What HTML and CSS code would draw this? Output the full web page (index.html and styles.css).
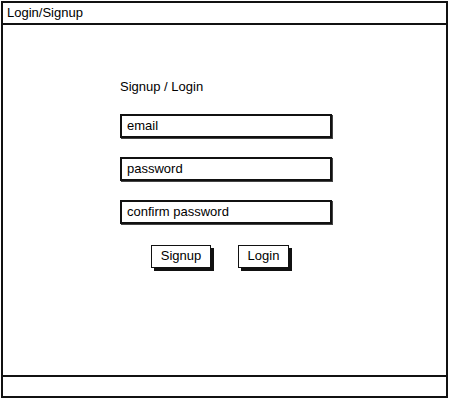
FILE: index.html
```html
<!DOCTYPE html>
<html>
<head>
<meta charset="utf-8">
<link rel="stylesheet" href="styles.css">
</head>
<body>
<div class="window">
  <div class="titlebar">Login/Signup</div>
  <div class="main">
    <div class="form">
      <div class="label">Signup / Login</div>
      <div class="field">email</div>
      <div class="field">password</div>
      <div class="field">confirm password</div>
      <div class="buttons">
        <div class="btn btn-signup">Signup</div>
        <div class="btn btn-login">Login</div>
      </div>
    </div>
  </div>
  <div class="footer"></div>
</div>
</body>
</html>
```
FILE: styles.css
```css
html, body {
  margin: 0;
  padding: 0;
  background: #fff;
}
body {
  width: 450px;
  height: 400px;
  font-family: "Liberation Sans", Arial, sans-serif;
  color: #000;
}
.window {
  margin: 1px;
  width: 447px;
  height: 397px;
  box-sizing: border-box;
  border: 2px solid #111;
  display: flex;
  flex-direction: column;
}
.titlebar {
  height: 20px;
  border-bottom: 2px solid #111;
  font-size: 13px;
  line-height: 20px;
  padding-left: 4px;
}
.main {
  flex: 1;
}
.form {
  padding-top: 54px;
  padding-left: 117px;
  display: flex;
  flex-direction: column;
  align-items: flex-start;
}
.label {
  font-size: 13px;
  line-height: 16px;
  margin-bottom: 19px;
}
.field {
  width: 212px;
  height: 24px;
  box-sizing: border-box;
  border: 2px solid #111;
  box-shadow: 1px 1px 0 #444;
  font-size: 13px;
  line-height: 20px;
  padding-left: 5px;
  margin-bottom: 19px;
}
.buttons {
  display: flex;
  gap: 27px;
  margin-left: 31px;
  margin-top: 2px;
}
.btn {
  height: 23px;
  box-sizing: border-box;
  border: 1.5px solid #111;
  box-shadow: 3px 3px 0 #111;
  font-size: 13px;
  line-height: 20px;
  text-align: center;
}
.btn-signup {
  width: 60px;
}
.btn-login {
  width: 51px;
}
.footer {
  height: 19px;
  border-top: 2px solid #111;
}
```
